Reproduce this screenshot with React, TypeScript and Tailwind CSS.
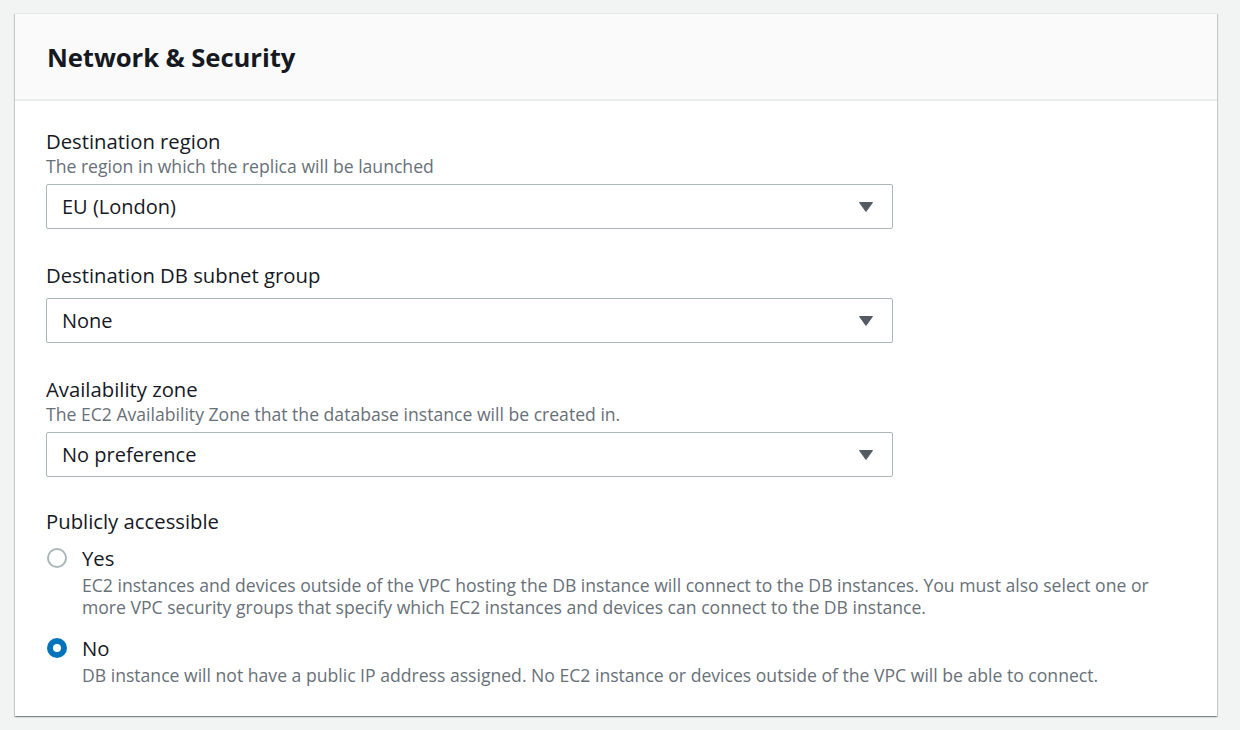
import React from 'react';

const font = { fontFamily: '"Open Sans", "Liberation Sans", sans-serif' };

function Caret() {
  return (
    <svg width="14" height="10" viewBox="0 0 14 10" className="shrink-0">
      <path d="M0.5 0.5 H13.5 L7 9.5 Z" fill="#545b64" stroke="#545b64" strokeLinejoin="round" />
    </svg>
  );
}

function SelectField({ value }: { value: string }) {
  return (
    <div className="w-[847px] h-[45px] border border-[#aab7b8] rounded-[2px] flex items-center justify-between pl-[15px] pr-[19px] bg-white">
      <span className="text-[20px] text-[#16191f]">{value}</span>
      <Caret />
    </div>
  );
}

function Radio({ checked }: { checked: boolean }) {
  if (checked) {
    return (
      <span className="w-[20px] h-[20px] rounded-full bg-[#0073bb] flex items-center justify-center shrink-0">
        <span className="block w-[8px] h-[8px] rounded-full bg-white" />
      </span>
    );
  }
  return <span className="block w-[20px] h-[20px] rounded-full border-2 border-[#aab7b8] bg-white shrink-0" />;
}

const options = [
  {
    label: 'Yes',
    checked: false,
    desc: 'EC2 instances and devices outside of the VPC hosting the DB instance will connect to the DB instances. You must also select one or more VPC security groups that specify which EC2 instances and devices can connect to the DB instance.',
  },
  {
    label: 'No',
    checked: true,
    desc: 'DB instance will not have a public IP address assigned. No EC2 instance or devices outside of the VPC will be able to connect.',
  },
];

export default function App() {
  return (
    <div className="min-h-screen bg-[#f2f3f3] pt-[13px] pl-[15px]" style={font}>
      <div className="w-[1202px] bg-white border-t border-[#e4e7e7] shadow-[0_1px_1px_0_rgba(0,28,36,0.3),1px_1px_1px_0_rgba(0,28,36,0.15),-1px_1px_1px_0_rgba(0,28,36,0.15)]">
        {/* Header */}
        <div className="h-[87px] bg-[#fafafa] border-b-2 border-[#eaeded] flex items-center px-[32px] pt-[3px]">
          <h2 className="text-[25.7px] font-bold text-[#16191f] tracking-[-0.1px]">Network &amp; Security</h2>
        </div>

        {/* Body */}
        <div className="pl-[31px] pr-[34px] pt-[27px] pb-[30px] text-[#16191f]">
          <div>
            <div className="text-[20.3px] leading-[26px]">Destination region</div>
            <div className="text-[17.6px] leading-[25px] text-[#687078]">The region in which the replica will be launched</div>
            <div className="mt-[5px]">
              <SelectField value="EU (London)" />
            </div>
          </div>

          <div className="mt-[33px]">
            <div className="text-[20.3px] leading-[26px]">Destination DB subnet group</div>
            <div className="mt-[10px]">
              <SelectField value="None" />
            </div>
          </div>

          <div className="mt-[33px]">
            <div className="text-[20.3px] leading-[26px]">Availability zone</div>
            <div className="text-[17.6px] leading-[25px] text-[#687078]">The EC2 Availability Zone that the database instance will be created in.</div>
            <div className="mt-[5px]">
              <SelectField value="No preference" />
            </div>
          </div>

          <div className="mt-[31px]">
            <div className="text-[20.3px] leading-[26px]">Publicly accessible</div>
            <div className="mt-[11px] flex flex-col gap-[17px]">
              {options.map((o) => (
                <div key={o.label} className="flex items-start gap-[15px] pl-[1px]">
                  <div className="pt-[3px]">
                    <Radio checked={o.checked} />
                  </div>
                  <div>
                    <div className="text-[20.3px] leading-[26px]">{o.label}</div>
                    <div className="mt-[3px] text-[17.6px] leading-[22px] text-[#687078]">{o.desc}</div>
                  </div>
                </div>
              ))}
            </div>
          </div>
        </div>
      </div>
    </div>
  );
}
